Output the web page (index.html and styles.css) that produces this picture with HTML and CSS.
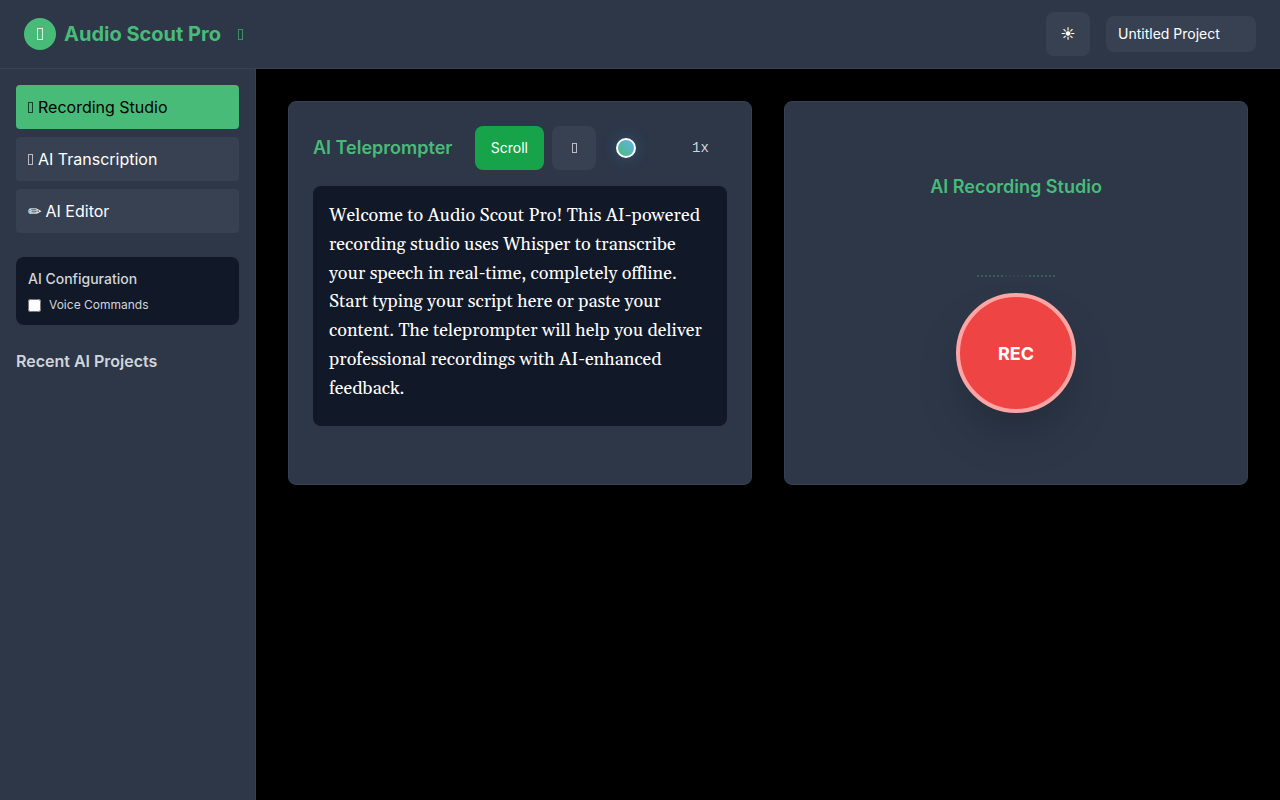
FILE: index.html
```html
<!DOCTYPE html>
<html lang="en">
<head>
<meta charset="utf-8">
<title>Audio Scout Pro</title>
<link rel="stylesheet" href="styles.css">
</head>
<body>
<div class="app">
  <header class="topbar">
    <div class="brand">
      <span class="brand-logo"><span class="glyph glyph-large"></span></span>
      <h1 class="brand-name">Audio Scout Pro</h1>
      <span class="brand-status"><span class="glyph"></span></span>
    </div>
    <div class="topbar-actions">
      <button class="icon-button" type="button" aria-label="Toggle theme">☀</button>
      <input class="project-name" type="text" value="Untitled Project" aria-label="Project name">
    </div>
  </header>
  <div class="body">
    <aside class="sidebar">
      <nav class="nav">
        <button class="nav-item nav-item-active" type="button"><span class="glyph"></span>Recording Studio</button>
        <button class="nav-item" type="button"><span class="glyph"></span>AI Transcription</button>
        <button class="nav-item" type="button">✏ AI Editor</button>
      </nav>
      <section class="config">
        <h2 class="config-title">AI Configuration</h2>
        <label class="config-option"><input class="config-check" type="checkbox">Voice Commands</label>
      </section>
      <h2 class="recent-title">Recent AI Projects</h2>
    </aside>
    <main class="main">
      <section class="panel">
        <div class="panel-head">
          <h2 class="panel-title">AI Teleprompter</h2>
          <div class="controls">
            <button class="scroll-button" type="button">Scroll</button>
            <button class="icon-button" type="button" aria-label="Reset"><span class="glyph glyph-small"></span></button>
            <input class="speed" type="range" min="0.5" max="3" step="0.1" value="1" aria-label="Scroll speed">
            <span class="speed-value">1x</span>
          </div>
        </div>
        <div class="script" contenteditable="true" spellcheck="false" role="textbox" aria-label="Script">Welcome to Audio Scout Pro! This AI-powered recording studio uses Whisper to transcribe your speech in real-time, completely offline. Start typing your script here or paste your content. The teleprompter will help you deliver professional recordings with AI-enhanced feedback.</div>
      </section>
      <section class="panel panel-record">
        <h2 class="panel-title">AI Recording Studio</h2>
        <div class="wave">
          <i class="bar"></i><i class="bar"></i><i class="bar"></i><i class="bar"></i><i class="bar"></i>
          <i class="bar"></i><i class="bar"></i><i class="bar bar-dim"></i><i class="bar bar-faint"></i><i class="bar bar-faint"></i>
          <i class="bar bar-faint"></i><i class="bar bar-faint"></i><i class="bar bar-dim"></i><i class="bar"></i><i class="bar"></i>
          <i class="bar"></i><i class="bar"></i><i class="bar"></i><i class="bar"></i><i class="bar"></i>
        </div>
        <button class="record-button" type="button">REC</button>
      </section>
    </main>
  </div>
</div>
</body>
</html>
```
FILE: styles.css
```css
* {
  box-sizing: border-box;
}

body {
  margin: 0;
  background: #000;
  color: #fff;
  font-family: Inter, "Liberation Sans", sans-serif;
  font-size: 16px;
  line-height: 24px;
}

h1, h2 {
  margin: 0;
}

button, input {
  font-family: inherit;
  border: 0;
  color: inherit;
}

.app {
  display: flex;
  flex-direction: column;
  min-height: 100vh;
}

.topbar {
  display: flex;
  align-items: center;
  justify-content: space-between;
  padding: 12px 24px;
  background: #2d3748;
  border-bottom: 1px solid #374151;
}

.brand, .topbar-actions {
  display: flex;
  align-items: center;
}

.brand {
  gap: 8px;
}

.topbar-actions {
  gap: 16px;
}

.brand-logo {
  display: flex;
  align-items: center;
  justify-content: center;
  width: 32px;
  height: 32px;
  border-radius: 50%;
  background: #48bb78;
}

.brand-name {
  color: #48bb78;
  font-size: 20px;
  font-weight: 700;
  line-height: 28px;
}

.brand-status {
  display: flex;
  margin-left: 9px;
  color: #48bb78;
}

/* Narrow outlined box used as the placeholder icon */
.glyph {
  flex: none;
  display: inline-block;
  width: 5px;
  height: 11px;
  border: 1px solid currentColor;
  opacity: 0.65;
}

.glyph-large {
  width: 6px;
  height: 12px;
  opacity: 0.8;
}

.glyph-small {
  height: 10px;
}

.icon-button {
  display: flex;
  align-items: center;
  justify-content: center;
  width: 44px;
  height: 44px;
  padding: 0;
  border-radius: 8px;
  background: #374151;
  font-size: 14px;
  line-height: 20px;
}

.project-name {
  width: 150px;
  height: 36px;
  padding: 8px 12px 10px;
  border-radius: 8px;
  background: #374151;
  font-size: 14px;
}

.body {
  display: flex;
  flex: 1;
}

.sidebar {
  flex: 0 0 256px;
  padding: 16px;
  background: #2d3748;
  border-right: 1px solid #374151;
}

.nav {
  display: flex;
  flex-direction: column;
  gap: 8px;
}

.nav-item {
  display: flex;
  align-items: center;
  gap: 5px;
  height: 44px;
  padding: 0 12px;
  border-radius: 4px;
  background: #374151;
  font-size: 16px;
  text-align: left;
}

.nav-item-active {
  background: #48bb78;
  color: #000;
}

.config {
  margin: 24px 0;
  padding: 12px;
  border-radius: 8px;
  background: #111827;
  color: #d1d5db;
}

.config-title {
  margin-bottom: 8px;
  font-size: 14px;
  font-weight: 500;
  line-height: 20px;
}

.config-option {
  display: flex;
  align-items: center;
  gap: 8px;
  font-size: 12px;
  line-height: 16px;
}

.config-check {
  width: 13px;
  height: 13px;
  margin: 0;
}

.recent-title {
  color: #d1d5db;
  font-size: 16px;
  font-weight: 600;
}

.main {
  display: grid;
  grid-template-columns: 1fr 1fr;
  align-items: start;
  gap: 32px;
  flex: 1;
  padding: 32px;
}

.panel {
  min-height: 384px;
  padding: 24px;
  border: 1px solid #374151;
  border-radius: 8px;
  background: #2d3748;
}

.panel-head {
  display: flex;
  align-items: center;
  justify-content: space-between;
  margin-bottom: 16px;
}

.panel-title {
  color: #48bb78;
  font-size: 18px;
  font-weight: 600;
  line-height: 28px;
}

.controls {
  display: flex;
  align-items: center;
  gap: 8px;
}

.scroll-button {
  height: 44px;
  padding: 0 16px;
  border-radius: 8px;
  background: #16a34a;
  font-size: 14px;
  line-height: 20px;
}

.speed {
  appearance: none;
  width: 80px;
  height: 20px;
  margin: 0;
  background: transparent;
}

.speed::-webkit-slider-thumb {
  appearance: none;
  width: 20px;
  height: 20px;
  border: 2px solid #fff;
  border-radius: 50%;
  background: linear-gradient(45deg, #48bb78, #63b3ed);
  box-shadow: 0 0 15px rgba(66, 153, 225, 0.3);
}

.speed-value {
  width: 35px;
  color: #d1d5db;
  font-family: "Liberation Mono", monospace;
  font-size: 14px;
  line-height: 20px;
}

.script {
  height: 240px;
  padding: 16px;
  overflow: auto;
  border-radius: 8px;
  background: #111827;
  font-family: Gelasio, Georgia, serif;
  font-size: 18px;
  line-height: 1.6;
}

.panel-record {
  display: flex;
  flex-direction: column;
  align-items: center;
  justify-content: center;
}

.wave {
  display: flex;
  align-items: flex-end;
  gap: 2px;
  height: 60px;
  margin: 16px 0;
}

.bar {
  width: 2px;
  height: 2px;
  background: #48bb78;
  opacity: 0.3;
}

.bar-dim {
  opacity: 0.15;
}

.bar-faint {
  opacity: 0.1;
}

.record-button {
  width: 120px;
  height: 120px;
  border: 4px solid #fca5a5;
  border-radius: 50%;
  background: #ef4444;
  font-size: 18px;
  font-weight: 700;
  box-shadow: 0 25px 50px -12px rgba(0, 0, 0, 0.25);
}
```
